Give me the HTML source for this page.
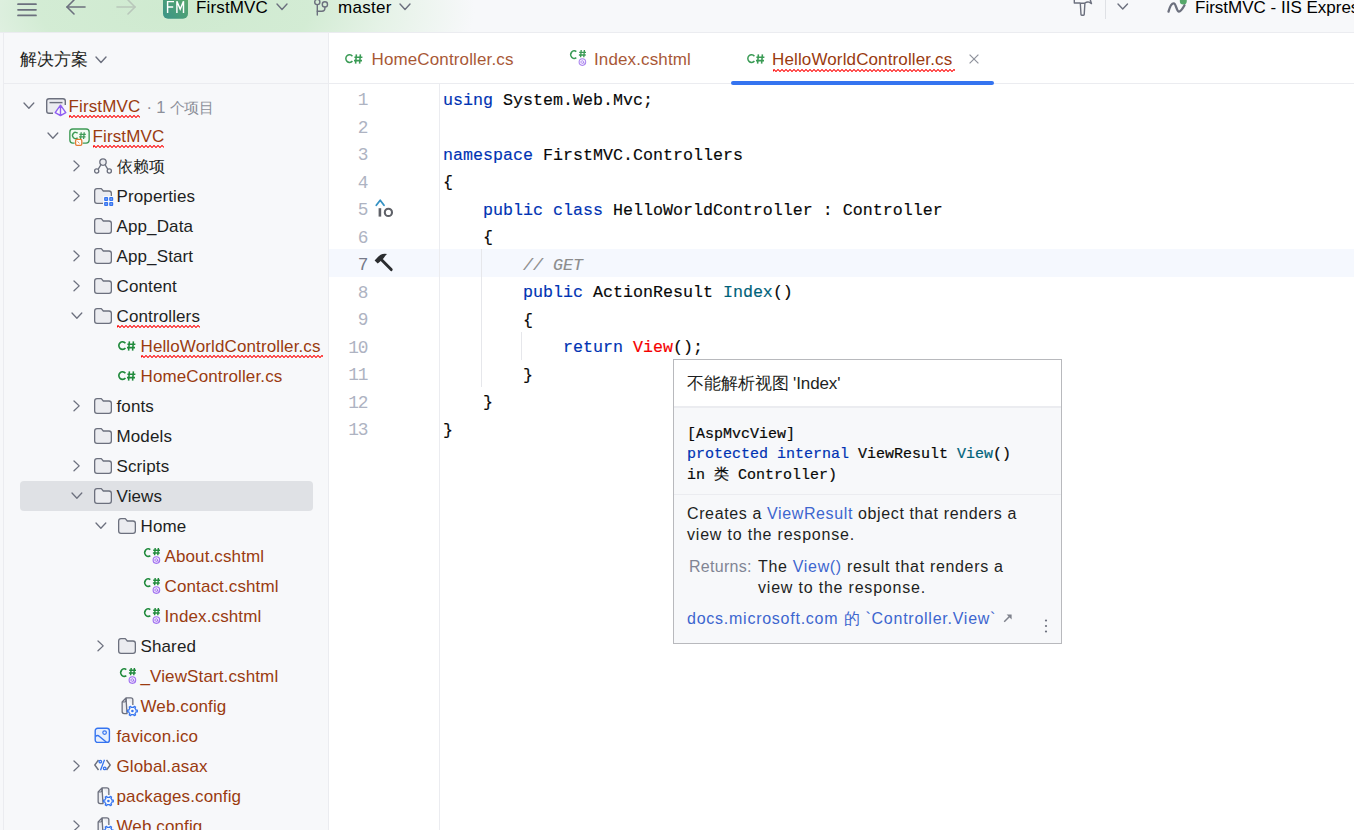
<!DOCTYPE html>
<html><head><meta charset="utf-8"><style>
*{margin:0;padding:0;box-sizing:border-box}
html,body{width:1354px;height:830px;overflow:hidden;background:#f7f8fa;font-family:"Liberation Sans",sans-serif;color:#000}
.a{position:absolute}
svg{position:absolute;overflow:visible}
#tb{left:0;top:0;width:1354px;height:33px;background:#f7f8fa;border-bottom:1px solid #ebecf0;overflow:hidden}
#tbg{left:0;top:0;width:1354px;height:32px;background:radial-gradient(ellipse 300px 120px at 175px 10px,rgba(207,234,208,1) 0%,rgba(209,235,210,0.95) 45%,rgba(222,240,223,0.7) 70%,rgba(247,248,250,0) 100%)}
.ui{font-size:17px;white-space:nowrap}
#left{left:0;top:33px;width:328px;height:797px;background:#f7f8fa}
#lline{left:3px;top:33px;width:1px;height:797px;background:#ebecf0}
#sep{left:328px;top:33px;width:1px;height:797px;background:#ebecf0}
#ed{left:329px;top:33px;width:1025px;height:797px;background:#fff}
#tabs{left:329px;top:33px;width:1025px;height:51px;border-bottom:1px solid #ebecf0;background:#fff}
.t{position:absolute;white-space:nowrap;font-size:17px;line-height:20px;color:#1e1f22}
.br{color:#9a3b10}
.gr{color:#8c8f99}
.code{position:absolute;font-family:"Liberation Mono",monospace;font-size:16.67px;line-height:20px;white-space:pre;color:#080808;-webkit-text-stroke:0.15px currentColor}
.ln{position:absolute;font-family:"Liberation Mono",monospace;font-size:17.8px;line-height:20px;color:#aeb3c2;text-align:right;width:40px;white-space:pre;letter-spacing:-1.2px;transform-origin:100% 0}
.kw{color:#0033b3}
.cm{color:#8c8c8c;font-style:italic}
.fn{color:#00627a}
.er{color:#f50000}
#pop{left:673px;top:359px;width:389px;height:285px;border:1px solid #b8b9bd;background:#f7f8fa}
.lnk{color:#3d66cf}
.pm{position:absolute;font-family:"Liberation Mono",monospace;font-size:15px;line-height:20px;white-space:pre;color:#080808;-webkit-text-stroke:0.2px currentColor}
.wv{text-decoration:underline wavy #f00;text-decoration-thickness:1px;text-underline-offset:3px;text-decoration-skip-ink:none}
</style></head><body>
<div id="tb" class="a"><div id="tbg" class="a"></div></div>
<svg style="left:17px;top:3px" width="20" height="14"><g stroke="#6c707e" stroke-width="1.7" stroke-linecap="round"><line x1="1" y1="1.2" x2="19" y2="1.2"/><line x1="1" y1="6.8" x2="19" y2="6.8"/><line x1="1" y1="12.4" x2="19" y2="12.4"/></g></svg>
<svg style="left:66px;top:0px" width="20" height="16"><g stroke="#6c707e" stroke-width="1.6" fill="none" stroke-linecap="round" stroke-linejoin="round"><path d="M1 7 H19"/><path d="M8 0 L1 7 L8 14"/></g></svg>
<svg style="left:116px;top:0px" width="20" height="16"><g stroke="#b9c7bb" stroke-width="1.6" fill="none" stroke-linecap="round" stroke-linejoin="round"><path d="M1 7 H19"/><path d="M12 0 L19 7 L12 14"/></g></svg>
<svg style="left:163px;top:-7px" width="25" height="26"><defs><linearGradient id="fmg" x1="0" y1="1" x2="1" y2="0"><stop offset="0" stop-color="#3a9388"/><stop offset="1" stop-color="#5caa68"/></linearGradient></defs><rect x="0" y="0" width="25" height="25.8" rx="5" fill="url(#fmg)"/><g stroke="#fff" stroke-width="1.45" fill="none" stroke-linejoin="miter"><path d="M4.6 20 V8.6 H11 M4.6 13.9 H10.2"/><path d="M13.9 20 V8.3 L17.2 16.2 L20.5 8.3 V20"/></g></svg>
<div class="t " style="left:196px;top:-1.89px;letter-spacing:0.15px;color:#000">FirstMVC</div>
<svg style="left:275.5px;top:3.2px" width="12" height="7.5"><path d="M1 1 L6.0 6.5 L11 1" stroke="#6c707e" stroke-width="1.4" fill="none" stroke-linecap="round" stroke-linejoin="round"/></svg>
<svg style="left:313px;top:-2px" width="16" height="20"><g stroke="#6c707e" stroke-width="1.4" fill="none" stroke-linecap="round"><circle cx="4.3" cy="4" r="2.6"/><path d="M4.3 6.6 V17"/><circle cx="11.9" cy="6.4" r="2.6"/><path d="M11.9 9 V10.3 Q11.9 13.3 8.9 13.3 H4.3"/></g></svg>
<div class="t " style="left:338px;top:-1.89px;letter-spacing:0.3px;color:#000">master</div>
<svg style="left:399.0px;top:3.2px" width="12" height="7.5"><path d="M1 1 L6.0 6.5 L11 1" stroke="#6c707e" stroke-width="1.4" fill="none" stroke-linecap="round" stroke-linejoin="round"/></svg>
<svg style="left:1073px;top:-4px" width="22" height="22"><g stroke="#6c707e" stroke-width="1.4" fill="none" stroke-linejoin="round"><path d="M1.3 -2 V7 H7.3 M11.9 7 Q14 5.5 16.2 6.2 L18.5 7.6 L17 3"/><path d="M7.3 7.3 L8 18.6 Q8 19.3 8.7 19.3 H10.5 Q11.2 19.3 11.2 18.6 L11.9 7.3 Z"/></g></svg>
<div class="a" style="left:1105px;top:0px;width:1px;height:19px;background:#dfe1e5"></div>
<svg style="left:1117.2px;top:3.3px" width="11.5" height="7"><path d="M1 1 L5.75 6 L10.5 1" stroke="#6c707e" stroke-width="1.4" fill="none" stroke-linecap="round" stroke-linejoin="round"/></svg>
<svg style="left:1166px;top:-3px" width="22" height="20"><path d="M2.5 14.6 C4 9 6 6 8 6.3 C10 6.6 10.5 14.6 13 14.6 C15 14.6 17 11 18.5 8.3" stroke="#6c707e" stroke-width="2.3" fill="none" stroke-linecap="round"/><circle cx="17.3" cy="3.9" r="3.5" fill="#55a76a"/></svg>
<div class="t " style="left:1195px;top:-1.89px;color:#000">FirstMVC - IIS Express</div>
<div id="left" class="a"></div><div id="lline" class="a"></div><div id="sep" class="a"></div>
<div class="t " style="left:20px;top:50.11px;">解决方案</div>
<svg style="left:94.5px;top:55.8px" width="12" height="7.5"><path d="M1 1 L6.0 6.5 L11 1" stroke="#6c707e" stroke-width="1.4" fill="none" stroke-linecap="round" stroke-linejoin="round"/></svg>
<div class="a" style="left:4px;top:83px;width:324px;height:1px;background:#ebecf0"></div>
<div class="a" style="left:19.5px;top:481px;width:293.5px;height:29.5px;border-radius:4px;background:#dfe1e5"></div>
<svg style="left:23.1px;top:102.1px" width="11.8" height="7.2"><path d="M1 1 L5.9 6.2 L10.8 1" stroke="#6c707e" stroke-width="1.3" fill="none" stroke-linecap="round" stroke-linejoin="round"/></svg>
<svg style="left:46px;top:98px" width="22" height="20"><g stroke="#6c707e" stroke-width="1.4" fill="none"><path d="M7 15.3 H3 Q0.7 15.3 0.7 13 V3 Q0.7 0.7 3 0.7 H17 Q19.3 0.7 19.3 3 V7" fill="#ebecf0"/><path d="M3.5 4.6 H16.5"/></g><path d="M14.5 7.2 L19.8 14.6 L14.5 17.6 L9.2 14.6 Z M14.5 7.2 V17.6" fill="#f7f8fa" stroke="#8f5ef2" stroke-width="1.4" stroke-linejoin="round"/></svg>
<div class="t br" style="left:68.5px;top:97.11px;letter-spacing:0.12px">FirstMVC</div>
<svg style="left:69.0px;top:115.0px;overflow:hidden" width="71" height="3.2"><path d="M0 2.5 L1 0.5 L3 2.5 L5 0.5 L7 2.5 L9 0.5 L11 2.5 L13 0.5 L15 2.5 L17 0.5 L19 2.5 L21 0.5 L23 2.5 L25 0.5 L27 2.5 L29 0.5 L31 2.5 L33 0.5 L35 2.5 L37 0.5 L39 2.5 L41 0.5 L43 2.5 L45 0.5 L47 2.5 L49 0.5 L51 2.5 L53 0.5 L55 2.5 L57 0.5 L59 2.5 L61 0.5 L63 2.5 L65 0.5 L67 2.5 L69 0.5 L71 2.5" stroke="#f00" stroke-width="1.05" fill="none"/></svg>
<div class="t gr" style="left:146.5px;top:97.28px;font-size:16.5px;letter-spacing:-0.2px">· 1 <span style="font-size:15px">个项目</span></div>
<svg style="left:47.1px;top:132.1px" width="11.8" height="7.2"><path d="M1 1 L5.9 6.2 L10.8 1" stroke="#6c707e" stroke-width="1.3" fill="none" stroke-linecap="round" stroke-linejoin="round"/></svg>
<svg style="left:69px;top:128px" width="22" height="20"><path d="M5.6 15.05 H3.85 Q0.85 15.05 0.85 12.05 V3.95 Q0.85 0.95 3.85 0.95 H17.15 Q20.15 0.95 20.15 3.95 V12.05 Q20.15 15.05 17.15 15.05 H13.6" fill="#f2fbf3" stroke="#3e9a55" stroke-width="1.35"/><g stroke="#3e9a55" fill="none"><path d="M8.6 5.3 A2.9 3.2 0 1 0 8.6 9.7" stroke-width="1.35"/><path d="M12.2 4.2 L11.6 11 M15.2 4.2 L14.6 11 M10.4 6.4 H16.8 M10.1 8.9 H16.5" stroke-width="1.25"/></g><rect x="6.6" y="11.4" width="6.2" height="5.9" rx="1.4" fill="#fff" stroke="#e57a33" stroke-width="1.3"/><path d="M8.5 13.4 L10.5 15.3" stroke="#e57a33" stroke-width="0.9"/></svg>
<div class="t br" style="left:92.5px;top:127.11px;letter-spacing:0.12px">FirstMVC</div>
<svg style="left:93.0px;top:145.0px;overflow:hidden" width="71" height="3.2"><path d="M0 2.5 L1 0.5 L3 2.5 L5 0.5 L7 2.5 L9 0.5 L11 2.5 L13 0.5 L15 2.5 L17 0.5 L19 2.5 L21 0.5 L23 2.5 L25 0.5 L27 2.5 L29 0.5 L31 2.5 L33 0.5 L35 2.5 L37 0.5 L39 2.5 L41 0.5 L43 2.5 L45 0.5 L47 2.5 L49 0.5 L51 2.5 L53 0.5 L55 2.5 L57 0.5 L59 2.5 L61 0.5 L63 2.5 L65 0.5 L67 2.5 L69 0.5 L71 2.5" stroke="#f00" stroke-width="1.05" fill="none"/></svg>
<svg style="left:72.9px;top:160.1px" width="7.2" height="11.8"><path d="M1 1 L6.2 5.9 L1 10.8" stroke="#6c707e" stroke-width="1.3" fill="none" stroke-linecap="round" stroke-linejoin="round"/></svg>
<svg style="left:94px;top:156px" width="20" height="20"><g stroke="#6c707e" stroke-width="1.3" fill="none"><circle cx="9" cy="6.1" r="3.2" fill="#ebecf0"/><circle cx="2.7" cy="15" r="2.1"/><circle cx="15.3" cy="15" r="2.1"/><path d="M7 8.6 L4.1 13.4 M11 8.6 L13.9 13.4"/></g></svg>
<div class="t " style="left:116.5px;top:157.11px;letter-spacing:0.12px"><span style="font-size:15.5px">依赖项</span></div>
<svg style="left:72.9px;top:190.1px" width="7.2" height="11.8"><path d="M1 1 L6.2 5.9 L1 10.8" stroke="#6c707e" stroke-width="1.3" fill="none" stroke-linecap="round" stroke-linejoin="round"/></svg>
<svg style="left:94px;top:188.0px" width="18" height="16"><path d="M0.65 3 Q0.65 0.65 3 0.65 H7.3 L9.3 3 H15 Q17.35 3 17.35 5.3 V13 Q17.35 15.35 15 15.35 H3 Q0.65 15.35 0.65 13 Z" fill="#ebecf0" stroke="#6c707e" stroke-width="1.3" stroke-linejoin="round"/><rect x="9" y="8" width="11" height="11" fill="#f7f8fa"/><g fill="#3574f0"><rect x="10.1" y="9" width="4" height="4" rx="0.9"/><rect x="15.2" y="9" width="4" height="4" rx="0.9"/><rect x="10.1" y="14" width="4" height="4" rx="0.9"/><rect x="15.2" y="14" width="4" height="4" rx="0.9"/></g><g fill="#8fb3f7"><rect x="11.4" y="10.3" width="1.4" height="1.4"/><rect x="16.5" y="10.3" width="1.4" height="1.4"/><rect x="11.4" y="15.3" width="1.4" height="1.4"/><rect x="16.5" y="15.3" width="1.4" height="1.4"/></g></svg>
<div class="t " style="left:116.5px;top:187.11px;letter-spacing:0.12px">Properties</div>
<svg style="left:94px;top:218.0px" width="18" height="16"><path d="M0.65 3 Q0.65 0.65 3 0.65 H7.3 L9.3 3 H15 Q17.35 3 17.35 5.3 V13 Q17.35 15.35 15 15.35 H3 Q0.65 15.35 0.65 13 Z" fill="#ebecf0" stroke="#6c707e" stroke-width="1.3" stroke-linejoin="round"/></svg>
<div class="t " style="left:116.5px;top:217.11px;letter-spacing:0.12px">App_Data</div>
<svg style="left:72.9px;top:250.1px" width="7.2" height="11.8"><path d="M1 1 L6.2 5.9 L1 10.8" stroke="#6c707e" stroke-width="1.3" fill="none" stroke-linecap="round" stroke-linejoin="round"/></svg>
<svg style="left:94px;top:248.0px" width="18" height="16"><path d="M0.65 3 Q0.65 0.65 3 0.65 H7.3 L9.3 3 H15 Q17.35 3 17.35 5.3 V13 Q17.35 15.35 15 15.35 H3 Q0.65 15.35 0.65 13 Z" fill="#ebecf0" stroke="#6c707e" stroke-width="1.3" stroke-linejoin="round"/></svg>
<div class="t " style="left:116.5px;top:247.11px;letter-spacing:0.12px">App_Start</div>
<svg style="left:72.9px;top:280.1px" width="7.2" height="11.8"><path d="M1 1 L6.2 5.9 L1 10.8" stroke="#6c707e" stroke-width="1.3" fill="none" stroke-linecap="round" stroke-linejoin="round"/></svg>
<svg style="left:94px;top:278.0px" width="18" height="16"><path d="M0.65 3 Q0.65 0.65 3 0.65 H7.3 L9.3 3 H15 Q17.35 3 17.35 5.3 V13 Q17.35 15.35 15 15.35 H3 Q0.65 15.35 0.65 13 Z" fill="#ebecf0" stroke="#6c707e" stroke-width="1.3" stroke-linejoin="round"/></svg>
<div class="t " style="left:116.5px;top:277.11px;letter-spacing:0.12px">Content</div>
<svg style="left:71.1px;top:312.1px" width="11.8" height="7.2"><path d="M1 1 L5.9 6.2 L10.8 1" stroke="#6c707e" stroke-width="1.3" fill="none" stroke-linecap="round" stroke-linejoin="round"/></svg>
<svg style="left:94px;top:308.0px" width="18" height="16"><path d="M0.65 3 Q0.65 0.65 3 0.65 H7.3 L9.3 3 H15 Q17.35 3 17.35 5.3 V13 Q17.35 15.35 15 15.35 H3 Q0.65 15.35 0.65 13 Z" fill="#ebecf0" stroke="#6c707e" stroke-width="1.3" stroke-linejoin="round"/></svg>
<div class="t " style="left:116.5px;top:307.11px;letter-spacing:0.12px">Controllers</div>
<svg style="left:117.0px;top:325.0px;overflow:hidden" width="83" height="3.2"><path d="M0 2.5 L1 0.5 L3 2.5 L5 0.5 L7 2.5 L9 0.5 L11 2.5 L13 0.5 L15 2.5 L17 0.5 L19 2.5 L21 0.5 L23 2.5 L25 0.5 L27 2.5 L29 0.5 L31 2.5 L33 0.5 L35 2.5 L37 0.5 L39 2.5 L41 0.5 L43 2.5 L45 0.5 L47 2.5 L49 0.5 L51 2.5 L53 0.5 L55 2.5 L57 0.5 L59 2.5 L61 0.5 L63 2.5 L65 0.5 L67 2.5 L69 0.5 L71 2.5 L73 0.5 L75 2.5 L77 0.5 L79 2.5 L81 0.5 L83 2.5" stroke="#f00" stroke-width="1.05" fill="none"/></svg>
<svg style="left:118.2px;top:341.2px" width="18" height="10"><g stroke="#208a3c" fill="none"><path d="M7.4 2.2 A3.7 3.8 0 1 0 7.4 7.0" stroke-width="1.65"/><path d="M11.4 0.4 L10.6 9.6 M15.4 0.4 L14.6 9.6 M9.4 3.3 H17.4 M9.0 6.6 H17.0" stroke-width="1.55"/></g></svg>
<div class="t br" style="left:140.5px;top:337.11px;letter-spacing:0.12px">HelloWorldController.cs</div>
<svg style="left:141.0px;top:355.0px;overflow:hidden" width="182" height="3.2"><path d="M0 2.5 L1 0.5 L3 2.5 L5 0.5 L7 2.5 L9 0.5 L11 2.5 L13 0.5 L15 2.5 L17 0.5 L19 2.5 L21 0.5 L23 2.5 L25 0.5 L27 2.5 L29 0.5 L31 2.5 L33 0.5 L35 2.5 L37 0.5 L39 2.5 L41 0.5 L43 2.5 L45 0.5 L47 2.5 L49 0.5 L51 2.5 L53 0.5 L55 2.5 L57 0.5 L59 2.5 L61 0.5 L63 2.5 L65 0.5 L67 2.5 L69 0.5 L71 2.5 L73 0.5 L75 2.5 L77 0.5 L79 2.5 L81 0.5 L83 2.5 L85 0.5 L87 2.5 L89 0.5 L91 2.5 L93 0.5 L95 2.5 L97 0.5 L99 2.5 L101 0.5 L103 2.5 L105 0.5 L107 2.5 L109 0.5 L111 2.5 L113 0.5 L115 2.5 L117 0.5 L119 2.5 L121 0.5 L123 2.5 L125 0.5 L127 2.5 L129 0.5 L131 2.5 L133 0.5 L135 2.5 L137 0.5 L139 2.5 L141 0.5 L143 2.5 L145 0.5 L147 2.5 L149 0.5 L151 2.5 L153 0.5 L155 2.5 L157 0.5 L159 2.5 L161 0.5 L163 2.5 L165 0.5 L167 2.5 L169 0.5 L171 2.5 L173 0.5 L175 2.5 L177 0.5 L179 2.5 L181 0.5 L183 2.5" stroke="#f00" stroke-width="1.05" fill="none"/></svg>
<svg style="left:118.2px;top:371.2px" width="18" height="10"><g stroke="#208a3c" fill="none"><path d="M7.4 2.2 A3.7 3.8 0 1 0 7.4 7.0" stroke-width="1.65"/><path d="M11.4 0.4 L10.6 9.6 M15.4 0.4 L14.6 9.6 M9.4 3.3 H17.4 M9.0 6.6 H17.0" stroke-width="1.55"/></g></svg>
<div class="t br" style="left:140.5px;top:367.11px;letter-spacing:0.12px">HomeController.cs</div>
<svg style="left:72.9px;top:400.1px" width="7.2" height="11.8"><path d="M1 1 L6.2 5.9 L1 10.8" stroke="#6c707e" stroke-width="1.3" fill="none" stroke-linecap="round" stroke-linejoin="round"/></svg>
<svg style="left:94px;top:398.0px" width="18" height="16"><path d="M0.65 3 Q0.65 0.65 3 0.65 H7.3 L9.3 3 H15 Q17.35 3 17.35 5.3 V13 Q17.35 15.35 15 15.35 H3 Q0.65 15.35 0.65 13 Z" fill="#ebecf0" stroke="#6c707e" stroke-width="1.3" stroke-linejoin="round"/></svg>
<div class="t " style="left:116.5px;top:397.11px;letter-spacing:0.12px">fonts</div>
<svg style="left:94px;top:428.0px" width="18" height="16"><path d="M0.65 3 Q0.65 0.65 3 0.65 H7.3 L9.3 3 H15 Q17.35 3 17.35 5.3 V13 Q17.35 15.35 15 15.35 H3 Q0.65 15.35 0.65 13 Z" fill="#ebecf0" stroke="#6c707e" stroke-width="1.3" stroke-linejoin="round"/></svg>
<div class="t " style="left:116.5px;top:427.11px;letter-spacing:0.12px">Models</div>
<svg style="left:72.9px;top:460.1px" width="7.2" height="11.8"><path d="M1 1 L6.2 5.9 L1 10.8" stroke="#6c707e" stroke-width="1.3" fill="none" stroke-linecap="round" stroke-linejoin="round"/></svg>
<svg style="left:94px;top:458.0px" width="18" height="16"><path d="M0.65 3 Q0.65 0.65 3 0.65 H7.3 L9.3 3 H15 Q17.35 3 17.35 5.3 V13 Q17.35 15.35 15 15.35 H3 Q0.65 15.35 0.65 13 Z" fill="#ebecf0" stroke="#6c707e" stroke-width="1.3" stroke-linejoin="round"/></svg>
<div class="t " style="left:116.5px;top:457.11px;letter-spacing:0.12px">Scripts</div>
<svg style="left:71.1px;top:492.1px" width="11.8" height="7.2"><path d="M1 1 L5.9 6.2 L10.8 1" stroke="#6c707e" stroke-width="1.3" fill="none" stroke-linecap="round" stroke-linejoin="round"/></svg>
<svg style="left:94px;top:488.0px" width="18" height="16"><path d="M0.65 3 Q0.65 0.65 3 0.65 H7.3 L9.3 3 H15 Q17.35 3 17.35 5.3 V13 Q17.35 15.35 15 15.35 H3 Q0.65 15.35 0.65 13 Z" fill="#ebecf0" stroke="#6c707e" stroke-width="1.3" stroke-linejoin="round"/></svg>
<div class="t " style="left:116.5px;top:487.11px;letter-spacing:0.12px">Views</div>
<svg style="left:95.1px;top:522.1px" width="11.8" height="7.2"><path d="M1 1 L5.9 6.2 L10.8 1" stroke="#6c707e" stroke-width="1.3" fill="none" stroke-linecap="round" stroke-linejoin="round"/></svg>
<svg style="left:118px;top:518.0px" width="18" height="16"><path d="M0.65 3 Q0.65 0.65 3 0.65 H7.3 L9.3 3 H15 Q17.35 3 17.35 5.3 V13 Q17.35 15.35 15 15.35 H3 Q0.65 15.35 0.65 13 Z" fill="#ebecf0" stroke="#6c707e" stroke-width="1.3" stroke-linejoin="round"/></svg>
<div class="t " style="left:140.5px;top:517.11px;letter-spacing:0.12px">Home</div>
<svg style="left:142.0px;top:547.0px" width="20" height="20"><g stroke="#208a3c" fill="none"><path d="M8.3 2.6 A3.4 3.8 0 1 0 8.3 8.6" stroke-width="1.6"/><path d="M13.2 1 L12.6 8.2 M16.4 1 L15.8 8.2 M11.2 3.3 H18 M10.9 6 H17.7" stroke-width="1.45"/></g><circle cx="14.4" cy="13.1" r="3.3" fill="#f1e9fd" stroke="#9f6ff0" stroke-width="1.1"/><path d="M15.6 13.1 A1.3 1.3 0 1 1 15.6 13 V14 Q15.6 14.6 16.6 14.2" fill="none" stroke="#9f6ff0" stroke-width="1"/></svg>
<div class="t br" style="left:164.5px;top:547.11px;letter-spacing:0.12px">About.cshtml</div>
<svg style="left:142.0px;top:577.0px" width="20" height="20"><g stroke="#208a3c" fill="none"><path d="M8.3 2.6 A3.4 3.8 0 1 0 8.3 8.6" stroke-width="1.6"/><path d="M13.2 1 L12.6 8.2 M16.4 1 L15.8 8.2 M11.2 3.3 H18 M10.9 6 H17.7" stroke-width="1.45"/></g><circle cx="14.4" cy="13.1" r="3.3" fill="#f1e9fd" stroke="#9f6ff0" stroke-width="1.1"/><path d="M15.6 13.1 A1.3 1.3 0 1 1 15.6 13 V14 Q15.6 14.6 16.6 14.2" fill="none" stroke="#9f6ff0" stroke-width="1"/></svg>
<div class="t br" style="left:164.5px;top:577.11px;letter-spacing:0.12px">Contact.cshtml</div>
<svg style="left:142.0px;top:607.0px" width="20" height="20"><g stroke="#208a3c" fill="none"><path d="M8.3 2.6 A3.4 3.8 0 1 0 8.3 8.6" stroke-width="1.6"/><path d="M13.2 1 L12.6 8.2 M16.4 1 L15.8 8.2 M11.2 3.3 H18 M10.9 6 H17.7" stroke-width="1.45"/></g><circle cx="14.4" cy="13.1" r="3.3" fill="#f1e9fd" stroke="#9f6ff0" stroke-width="1.1"/><path d="M15.6 13.1 A1.3 1.3 0 1 1 15.6 13 V14 Q15.6 14.6 16.6 14.2" fill="none" stroke="#9f6ff0" stroke-width="1"/></svg>
<div class="t br" style="left:164.5px;top:607.11px;letter-spacing:0.12px">Index.cshtml</div>
<svg style="left:96.9px;top:640.1px" width="7.2" height="11.8"><path d="M1 1 L6.2 5.9 L1 10.8" stroke="#6c707e" stroke-width="1.3" fill="none" stroke-linecap="round" stroke-linejoin="round"/></svg>
<svg style="left:118px;top:638.0px" width="18" height="16"><path d="M0.65 3 Q0.65 0.65 3 0.65 H7.3 L9.3 3 H15 Q17.35 3 17.35 5.3 V13 Q17.35 15.35 15 15.35 H3 Q0.65 15.35 0.65 13 Z" fill="#ebecf0" stroke="#6c707e" stroke-width="1.3" stroke-linejoin="round"/></svg>
<div class="t " style="left:140.5px;top:637.11px;letter-spacing:0.12px">Shared</div>
<svg style="left:118.0px;top:667.0px" width="20" height="20"><g stroke="#208a3c" fill="none"><path d="M8.3 2.6 A3.4 3.8 0 1 0 8.3 8.6" stroke-width="1.6"/><path d="M13.2 1 L12.6 8.2 M16.4 1 L15.8 8.2 M11.2 3.3 H18 M10.9 6 H17.7" stroke-width="1.45"/></g><circle cx="14.4" cy="13.1" r="3.3" fill="#f1e9fd" stroke="#9f6ff0" stroke-width="1.1"/><path d="M15.6 13.1 A1.3 1.3 0 1 1 15.6 13 V14 Q15.6 14.6 16.6 14.2" fill="none" stroke="#9f6ff0" stroke-width="1"/></svg>
<div class="t br" style="left:140.5px;top:667.11px;letter-spacing:0.12px">_ViewStart.cshtml</div>
<svg style="left:118.5px;top:697.0px" width="20" height="20"><path d="M7 0.85 H11.85 Q13.85 0.85 13.85 2.85 V8 M8 16.55 H5.15 Q3.15 16.55 3.15 14.55 V5 L7 0.85 Z" fill="#ebecf0" stroke="#6c707e" stroke-width="1.3" stroke-linejoin="round"/><path d="M3.3 5 H5.6 Q7 5 7 3.6 V1" fill="none" stroke="#6c707e" stroke-width="1.2"/><path d="M16.60 12.15 L17.01 13.17 L18.34 13.22 L18.34 14.78 L17.01 14.83 L16.60 15.85 L15.92 16.71 L16.55 17.89 L15.19 18.67 L14.48 17.54 L13.40 17.70 L12.32 17.54 L11.61 18.67 L10.25 17.89 L10.88 16.71 L10.20 15.85 L9.79 14.83 L8.46 14.78 L8.46 13.22 L9.79 13.17 L10.20 12.15 L10.88 11.29 L10.25 10.11 L11.61 9.33 L12.32 10.46 L13.40 10.30 L14.48 10.46 L15.19 9.33 L16.55 10.11 L15.92 11.29 Z" fill="#f7f8fa" stroke="#3574f0" stroke-width="1.25" stroke-linejoin="round"/><circle cx="13.4" cy="14" r="1.3" fill="#3574f0"/></svg>
<div class="t br" style="left:140.5px;top:697.11px;letter-spacing:0.12px">Web.config</div>
<svg style="left:94px;top:727px" width="18" height="18"><rect x="1.2" y="1.2" width="14.2" height="14.2" rx="2.5" fill="#e7effd" stroke="#3574f0" stroke-width="1.4"/><circle cx="10.6" cy="5.6" r="1.8" fill="none" stroke="#3574f0" stroke-width="1.2"/><path d="M1.5 9.5 Q3.5 7.5 5.5 9.5 L12.5 15.3" fill="none" stroke="#3574f0" stroke-width="1.4"/></svg>
<div class="t br" style="left:116.5px;top:727.11px;letter-spacing:0.12px">favicon.ico</div>
<svg style="left:72.9px;top:760.1px" width="7.2" height="11.8"><path d="M1 1 L6.2 5.9 L1 10.8" stroke="#6c707e" stroke-width="1.3" fill="none" stroke-linecap="round" stroke-linejoin="round"/></svg>
<svg style="left:94px;top:759px" width="20" height="14"><g stroke="#6c707e" stroke-width="1.4" fill="none" stroke-linejoin="round"><path d="M4.5 1 L0.8 6 L4.5 11"/><path d="M12.5 1 L16.2 6 L12.5 11"/></g><g stroke="#3574f0" stroke-width="1.3" fill="none"><path d="M10.5 0.8 L6.5 11.2"/><circle cx="6.3" cy="2.6" r="1.3"/><circle cx="10.7" cy="9.4" r="1.3"/></g></svg>
<div class="t br" style="left:116.5px;top:757.11px;letter-spacing:0.12px">Global.asax</div>
<svg style="left:94.5px;top:787.0px" width="20" height="20"><path d="M7 0.85 H11.85 Q13.85 0.85 13.85 2.85 V8 M8 16.55 H5.15 Q3.15 16.55 3.15 14.55 V5 L7 0.85 Z" fill="#ebecf0" stroke="#6c707e" stroke-width="1.3" stroke-linejoin="round"/><path d="M3.3 5 H5.6 Q7 5 7 3.6 V1" fill="none" stroke="#6c707e" stroke-width="1.2"/><path d="M16.60 12.15 L17.01 13.17 L18.34 13.22 L18.34 14.78 L17.01 14.83 L16.60 15.85 L15.92 16.71 L16.55 17.89 L15.19 18.67 L14.48 17.54 L13.40 17.70 L12.32 17.54 L11.61 18.67 L10.25 17.89 L10.88 16.71 L10.20 15.85 L9.79 14.83 L8.46 14.78 L8.46 13.22 L9.79 13.17 L10.20 12.15 L10.88 11.29 L10.25 10.11 L11.61 9.33 L12.32 10.46 L13.40 10.30 L14.48 10.46 L15.19 9.33 L16.55 10.11 L15.92 11.29 Z" fill="#f7f8fa" stroke="#3574f0" stroke-width="1.25" stroke-linejoin="round"/><circle cx="13.4" cy="14" r="1.3" fill="#3574f0"/></svg>
<div class="t br" style="left:116.5px;top:787.11px;letter-spacing:0.12px">packages.config</div>
<svg style="left:72.9px;top:820.1px" width="7.2" height="11.8"><path d="M1 1 L6.2 5.9 L1 10.8" stroke="#6c707e" stroke-width="1.3" fill="none" stroke-linecap="round" stroke-linejoin="round"/></svg>
<svg style="left:94.5px;top:817.0px" width="20" height="20"><path d="M7 0.85 H11.85 Q13.85 0.85 13.85 2.85 V8 M8 16.55 H5.15 Q3.15 16.55 3.15 14.55 V5 L7 0.85 Z" fill="#ebecf0" stroke="#6c707e" stroke-width="1.3" stroke-linejoin="round"/><path d="M3.3 5 H5.6 Q7 5 7 3.6 V1" fill="none" stroke="#6c707e" stroke-width="1.2"/><path d="M16.60 12.15 L17.01 13.17 L18.34 13.22 L18.34 14.78 L17.01 14.83 L16.60 15.85 L15.92 16.71 L16.55 17.89 L15.19 18.67 L14.48 17.54 L13.40 17.70 L12.32 17.54 L11.61 18.67 L10.25 17.89 L10.88 16.71 L10.20 15.85 L9.79 14.83 L8.46 14.78 L8.46 13.22 L9.79 13.17 L10.20 12.15 L10.88 11.29 L10.25 10.11 L11.61 9.33 L12.32 10.46 L13.40 10.30 L14.48 10.46 L15.19 9.33 L16.55 10.11 L15.92 11.29 Z" fill="#f7f8fa" stroke="#3574f0" stroke-width="1.25" stroke-linejoin="round"/><circle cx="13.4" cy="14" r="1.3" fill="#3574f0"/></svg>
<div class="t br" style="left:116.5px;top:817.11px;letter-spacing:0.12px">Web.config</div>
<div id="ed" class="a"></div><div id="tabs" class="a"></div>
<svg style="left:345.0px;top:53.7px" width="18" height="10"><g stroke="#3a9b55" fill="none"><path d="M7.4 2.2 A3.7 3.8 0 1 0 7.4 7.0" stroke-width="1.5"/><path d="M11.4 0.4 L10.6 9.6 M15.4 0.4 L14.6 9.6 M9.4 3.3 H17.4 M9.0 6.6 H17.0" stroke-width="1.55"/></g></svg>
<div class="t br" style="left:371.5px;top:50.11px;letter-spacing:0.13px;opacity:.85">HomeController.cs</div>
<svg style="left:568px;top:49.2px" width="20" height="20"><g stroke="#3a9b55" fill="none"><path d="M8.3 2.6 A3.4 3.8 0 1 0 8.3 8.6" stroke-width="1.5"/><path d="M13.2 1 L12.6 8.2 M16.4 1 L15.8 8.2 M11.2 3.3 H18 M10.9 6 H17.7" stroke-width="1.35"/></g><circle cx="14.4" cy="13.1" r="3.3" fill="#f6f0fe" stroke="#a984ee" stroke-width="1.05"/><path d="M15.6 13.1 A1.3 1.3 0 1 1 15.6 13 V14 Q15.6 14.6 16.6 14.2" fill="none" stroke="#a984ee" stroke-width="0.95"/></svg>
<div class="t br" style="left:594px;top:50.11px;letter-spacing:0.13px;opacity:.85">Index.cshtml</div>
<svg style="left:747.0px;top:53.7px" width="18" height="10"><g stroke="#3a9b55" fill="none"><path d="M7.4 2.2 A3.7 3.8 0 1 0 7.4 7.0" stroke-width="1.5"/><path d="M11.4 0.4 L10.6 9.6 M15.4 0.4 L14.6 9.6 M9.4 3.3 H17.4 M9.0 6.6 H17.0" stroke-width="1.55"/></g></svg>
<div class="t br" style="left:772px;top:50.11px;letter-spacing:0.13px">HelloWorldController.cs</div>
<svg style="left:772.5px;top:69.0px;overflow:hidden" width="182" height="3.2"><path d="M0 2.5 L1 0.5 L3 2.5 L5 0.5 L7 2.5 L9 0.5 L11 2.5 L13 0.5 L15 2.5 L17 0.5 L19 2.5 L21 0.5 L23 2.5 L25 0.5 L27 2.5 L29 0.5 L31 2.5 L33 0.5 L35 2.5 L37 0.5 L39 2.5 L41 0.5 L43 2.5 L45 0.5 L47 2.5 L49 0.5 L51 2.5 L53 0.5 L55 2.5 L57 0.5 L59 2.5 L61 0.5 L63 2.5 L65 0.5 L67 2.5 L69 0.5 L71 2.5 L73 0.5 L75 2.5 L77 0.5 L79 2.5 L81 0.5 L83 2.5 L85 0.5 L87 2.5 L89 0.5 L91 2.5 L93 0.5 L95 2.5 L97 0.5 L99 2.5 L101 0.5 L103 2.5 L105 0.5 L107 2.5 L109 0.5 L111 2.5 L113 0.5 L115 2.5 L117 0.5 L119 2.5 L121 0.5 L123 2.5 L125 0.5 L127 2.5 L129 0.5 L131 2.5 L133 0.5 L135 2.5 L137 0.5 L139 2.5 L141 0.5 L143 2.5 L145 0.5 L147 2.5 L149 0.5 L151 2.5 L153 0.5 L155 2.5 L157 0.5 L159 2.5 L161 0.5 L163 2.5 L165 0.5 L167 2.5 L169 0.5 L171 2.5 L173 0.5 L175 2.5 L177 0.5 L179 2.5 L181 0.5 L183 2.5" stroke="#f00" stroke-width="1.05" fill="none"/></svg>
<svg style="left:969px;top:53.5px" width="10" height="10"><g stroke="#8f929c" stroke-width="1.2"><path d="M0.6 0.6 L9.4 9.4 M9.4 0.6 L0.6 9.4"/></g></svg>
<div class="a" style="left:731px;top:81px;width:263px;height:4px;border-radius:2px;background:#3574f0"></div>
<div class="a" style="left:329px;top:249px;width:1025px;height:27.7px;background:#f5f8fe"></div>
<div class="a" style="left:439px;top:84px;width:1px;height:746px;background:#ebecf0"></div>
<div class="a" style="left:481px;top:249px;width:1px;height:138px;background:#e6e7eb"></div>
<div class="a" style="left:521px;top:332px;width:1px;height:27.5px;background:#e6e7eb"></div>
<div class="ln" style="left:327.2px;top:90.26px;color:#aeb3c2">1</div>
<div class="code" style="left:443px;top:90.56px"><span class="kw">using</span> System.Web.Mvc;</div>
<div class="ln" style="left:327.2px;top:117.76px;color:#aeb3c2">2</div>
<div class="ln" style="left:327.2px;top:145.26px;color:#aeb3c2">3</div>
<div class="code" style="left:443px;top:145.56px"><span class="kw">namespace</span> FirstMVC.Controllers</div>
<div class="ln" style="left:327.2px;top:172.76px;color:#aeb3c2">4</div>
<div class="code" style="left:443px;top:173.06px">{</div>
<div class="ln" style="left:327.2px;top:200.26px;color:#aeb3c2">5</div>
<div class="code" style="left:443px;top:200.56px">    <span class="kw">public class</span> HelloWorldController : Controller</div>
<div class="ln" style="left:327.2px;top:227.76px;color:#aeb3c2">6</div>
<div class="code" style="left:443px;top:228.06px">    {</div>
<div class="ln" style="left:327.2px;top:255.26px;color:#767a8a">7</div>
<div class="code" style="left:443px;top:255.56px">        <span class="cm">// GET</span></div>
<div class="ln" style="left:327.2px;top:282.76px;color:#aeb3c2">8</div>
<div class="code" style="left:443px;top:283.06px">        <span class="kw">public</span> ActionResult <span class="fn">Index</span>()</div>
<div class="ln" style="left:327.2px;top:310.26px;color:#aeb3c2">9</div>
<div class="code" style="left:443px;top:310.56px">        {</div>
<div class="ln" style="left:327.2px;top:337.76px;color:#aeb3c2">10</div>
<div class="code" style="left:443px;top:338.06px">            <span class="kw">return</span> <span class="er">View</span>();</div>
<div class="ln" style="left:327.2px;top:365.26px;color:#aeb3c2">11</div>
<div class="code" style="left:443px;top:365.56px">        }</div>
<div class="ln" style="left:327.2px;top:392.76px;color:#aeb3c2">12</div>
<div class="code" style="left:443px;top:393.06px">    }</div>
<div class="ln" style="left:327.2px;top:420.26px;color:#aeb3c2">13</div>
<div class="code" style="left:443px;top:420.56px">}</div>
<svg style="left:370px;top:195px" width="30" height="30"><path d="M6.3 10.2 L10.2 5.2 L14 10.2" stroke="#3592c4" stroke-width="1.8" fill="none" stroke-linecap="round" stroke-linejoin="round"/><rect x="8.6" y="13.2" width="2.6" height="8.4" fill="#5f6168"/><circle cx="18.4" cy="17.4" r="3.6" fill="none" stroke="#5f6168" stroke-width="2.1"/></svg>
<svg style="left:370px;top:250px" width="30" height="30"><path d="M4.6 10.6 L7.7 13.6 L9.6 12 L13.6 8.2 Q15.2 5.6 17.2 4.1 Q13.6 3.3 10.6 4.8 L8.4 6.6 Z" fill="#2b2d30"/><path d="M12 10.2 L21.2 19.6" stroke="#2b2d30" stroke-width="2.9" stroke-linecap="round"/></svg>
<div id="pop" class="a"></div>
<div class="a" style="left:674px;top:360px;width:387px;height:46px;background:#fff"></div>
<div class="a" style="left:674px;top:406px;width:387px;height:2px;background:#ebecf0"></div>
<div class="t " style="left:687px;top:374.11px;letter-spacing:-0.1px">不能解析视图 'Index'</div>
<div class="pm" style="left:687px;top:424.50px">[AspMvcView]</div>
<div class="pm" style="left:687px;top:445.30px"><span class="kw">protected internal</span> ViewResult <span class="fn">View</span>()</div>
<div class="pm" style="left:687px;top:466.10px">in 类 Controller)</div>
<div class="a" style="left:674px;top:494px;width:387px;height:1px;background:#ebecf0"></div>
<div class="t " style="left:687px;top:504.16px;font-size:16px;letter-spacing:0.62px">Creates a <span class="lnk">ViewResult</span> object that renders a</div>
<div class="t " style="left:687px;top:524.96px;font-size:16px;letter-spacing:0.8px">view to the response.</div>
<div class="t gr" style="left:689px;top:556.96px;font-size:16px;letter-spacing:0.3px;color:#818594">Returns:</div>
<div class="t " style="left:758px;top:556.96px;font-size:16px;letter-spacing:0.68px">The <span class="lnk">View()</span> result that renders a</div>
<div class="t " style="left:758px;top:577.96px;font-size:16px;letter-spacing:0.8px">view to the response.</div>
<div class="t lnk" style="left:687px;top:608.96px;font-size:16px;letter-spacing:0.75px">docs.microsoft.com 的 `Controller.View`</div>
<svg style="left:1002px;top:612px" width="12" height="12"><path d="M2.2 9.8 L8 4" stroke="#7f828c" stroke-width="1.5" fill="none"/><path d="M4.6 2.4 H9.6 V7.4 Z" fill="#7f828c"/></svg>
<svg style="left:1043px;top:618px" width="6" height="16"><g fill="#6c707e"><circle cx="3" cy="2.5" r="1.1"/><circle cx="3" cy="8" r="1.1"/><circle cx="3" cy="13.5" r="1.1"/></g></svg>
</body></html>
